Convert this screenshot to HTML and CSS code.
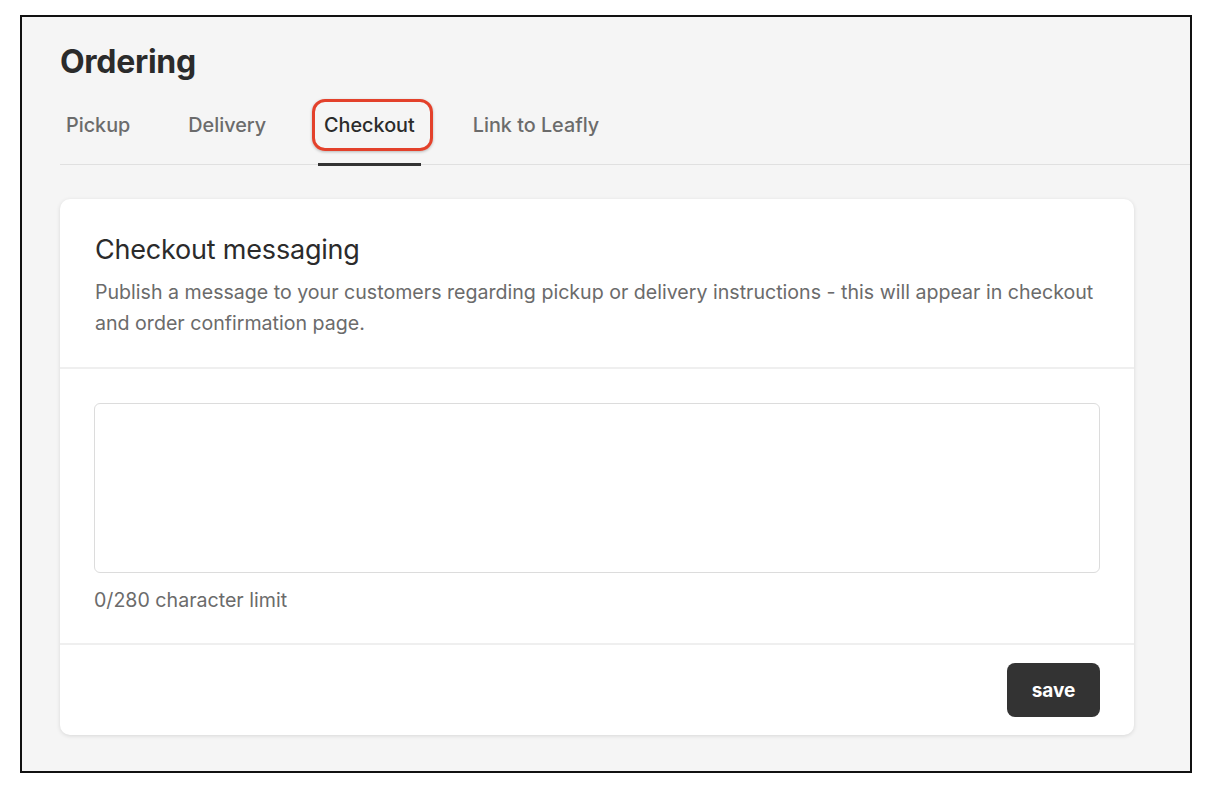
FILE: index.html
```html
<!doctype html>
<html lang="en">
<head>
    <meta charset="UTF-8">
    <title>Ordering</title>
    <link rel="stylesheet" href="styles.css">
</head>
<body>
<div class="frame">
    <h1 class="title">Ordering</h1>
    <ul class="tabs">
        <li>Pickup</li>
        <li>Delivery</li>
        <li class="cur">Checkout<span class="mark"></span></li>
        <li>Link to Leafly</li>
    </ul>
    <div class="card">
        <div class="card-head">
            <h2>Checkout messaging</h2>
            <p>Publish a message to your customers regarding pickup or delivery instructions - this will appear in checkout and order confirmation page.</p>
        </div>
        <div class="card-body">
            <textarea class="msg"></textarea>
            <div class="count">0/280 character limit</div>
        </div>
        <div class="card-foot">
            <button class="save">save</button>
        </div>
    </div>
</div>
</body>
</html>
```

FILE: styles.css
```css
*{
    margin: 0;
    padding: 0;
    list-style: none;
    box-sizing: border-box;
}
body{
    background: #fff;
    font-family: Inter, "Noto Sans", sans-serif;
    color: #2b2b2b;
}
.frame{
    margin: 15px 0 0 20px;
    width: 1172px;
    height: 758px;
    border: 2px solid #111;
    background: #f5f5f5;
    padding-top: 25px;
}
.title{
    margin-left: 38px;
    font-size: 32px;
    font-weight: 700;
    line-height: 40px;
    color: #2b2b2b;
    letter-spacing: -0.3px;
}
.tabs{
    margin: 31px 0 0 38px;
    display: flex;
    gap: 46px;
    border-bottom: 1px solid #e0e0e0;
}
.tabs li{
    position: relative;
    padding: 0 6px 26px;
    font-size: 19.8px;
    font-weight: 500;
    line-height: 24px;
    color: #6b6b6b;
    border-bottom: 3px solid transparent;
    margin-bottom: -2px;
}
.tabs li.cur{
    color: #2b2b2b;
    border-bottom-color: #333;
}
.tabs .mark{
    position: absolute;
    left: -6px;
    right: -12px;
    top: -14px;
    height: 52px;
    border: 3px solid #e3412b;
    border-radius: 13px;
    box-shadow: 0 1px 3px rgba(0,0,0,0.25);
}
.card{
    margin: 34px 0 0 38px;
    width: 1074px;
    background: #fff;
    border-radius: 10px;
    box-shadow: 0 1px 4px rgba(0,0,0,0.12);
}
.card-head{
    padding: 34px 35px 28px;
    border-bottom: 2px solid #efefef;
}
.card-head h2{
    font-size: 27px;
    font-weight: 400;
    line-height: 34px;
    color: #2b2b2b;
    letter-spacing: -0.2px;
}
.card-head p{
    margin-top: 10px;
    font-size: 19.6px;
    line-height: 31px;
    color: #6b6b6b;
}
.card-body{
    padding: 34px 34px 30px;
    border-bottom: 2px solid #efefef;
}
.msg{
    display: block;
    width: 100%;
    height: 170px;
    border: 1px solid #dcdcdc;
    border-radius: 6px;
    resize: none;
    font-family: inherit;
}
.count{
    margin-top: 14px;
    font-size: 19.6px;
    line-height: 26px;
    color: #6b6b6b;
}
.card-foot{
    display: flex;
    justify-content: flex-end;
    padding: 18px 34px 18px;
}
.save{
    width: 93px;
    height: 54px;
    border: none;
    border-radius: 8px;
    background: #333;
    color: #fff;
    font-family: inherit;
    font-size: 19px;
    font-weight: 700;
}
```
